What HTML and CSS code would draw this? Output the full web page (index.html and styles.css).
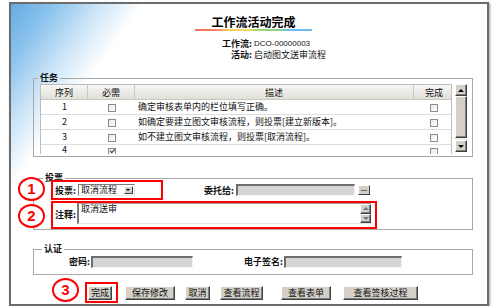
FILE: index.html
```html
<!DOCTYPE html>
<html lang="zh-CN">
<head>
    <meta charset="UTF-8">
    <title>工作流活动完成</title>
    <link rel="stylesheet" href="styles.css">
</head>
<body>
    <div class="frame">
        <span class="callout c1">1</span>
        <span class="callout c2">2</span>
        <span class="callout c3">3</span>

        <div class="head">
            <div class="title">工作流活动完成</div>
            <div class="rule"></div>
            <div class="info">
                <div class="info-row"><b>工作流:</b><span class="code">DCO-00000003</span></div>
                <div class="info-row"><b>活动:</b><span>启动图文送审流程</span></div>
            </div>
        </div>

        <fieldset class="group tasks">
            <legend>任务</legend>
            <div class="grid-wrap">
                <div class="grid-view">
                    <table class="grid">
                        <tr>
                            <th class="col-no">序列</th>
                            <th class="col-req">必需</th>
                            <th class="col-desc">描述</th>
                            <th class="col-done">完成</th>
                        </tr>
                        <tr>
                            <td class="c">1</td>
                            <td class="c"><span class="chk"></span></td>
                            <td>确定审核表单内的栏位填写正确。</td>
                            <td class="c"><span class="chk"></span></td>
                        </tr>
                        <tr>
                            <td class="c">2</td>
                            <td class="c"><span class="chk"></span></td>
                            <td>如确定要建立图文审核流程，则投票[建立新版本]。</td>
                            <td class="c"><span class="chk"></span></td>
                        </tr>
                        <tr>
                            <td class="c">3</td>
                            <td class="c"><span class="chk"></span></td>
                            <td>如不建立图文审核流程，则投票[取消流程]。</td>
                            <td class="c"><span class="chk"></span></td>
                        </tr>
                        <tr class="last">
                            <td class="c">4</td>
                            <td class="c"><span class="chk on"></span></td>
                            <td></td>
                            <td class="c"><span class="chk"></span></td>
                        </tr>
                    </table>
                </div>
                <div class="vscroll">
                    <div class="sb-btn"><span class="arr up"></span></div>
                    <div class="sb-thumb"></div>
                    <div class="sb-track"></div>
                    <div class="sb-btn"><span class="arr down"></span></div>
                </div>
            </div>
        </fieldset>

        <fieldset class="group vote">
            <legend>投票</legend>
            <div class="vote-row">
                <div class="mark mark-vote">
                    <b class="lbl">投票:</b>
                    <div class="select">
                        <span>取消流程</span>
                        <span class="select-btn"><span class="arr down"></span></span>
                    </div>
                </div>
                <b class="lbl lbl-deleg">委托给:</b>
                <div class="field field-deleg"></div>
                <div class="btn-dots">...</div>
            </div>
            <div class="vote-row">
                <div class="mark mark-note">
                    <b class="lbl lbl-note">注释:</b>
                    <div class="memo">
                        <span class="memo-text">取消送审</span>
                        <div class="memo-scroll">
                            <div class="sb-btn"><span class="arr up small"></span></div>
                            <div class="sb-btn"><span class="arr down small"></span></div>
                        </div>
                    </div>
                </div>
            </div>
        </fieldset>

        <fieldset class="group auth">
            <legend>认证</legend>
            <div class="auth-row">
                <b class="lbl lbl-pwd">密码:</b>
                <div class="field field-pwd"></div>
                <b class="lbl lbl-sig">电子签名:</b>
                <div class="field field-sig"></div>
            </div>
        </fieldset>

        <div class="actions">
            <div class="mark mark-done">
                <button class="btn btn-done">完成</button>
            </div>
            <button class="btn btn-save">保存修改</button>
            <button class="btn btn-cancel">取消</button>
            <button class="btn btn-flow">查看流程</button>
            <button class="btn btn-form">查看表单</button>
            <button class="btn btn-sign">查看签核过程</button>
        </div>
    </div>
</body>
</html>
```

FILE: styles.css
```css
body {
    margin: 0;
    background: #fff;
    font-family: "Noto Sans CJK SC", sans-serif;
    font-size: 9px;
    color: #111;
}
.frame {
    position: relative;
    width: 476px;
    height: 300px;
    margin: 2px 0 0 9px;
    border: 2px solid #6c6c6c;
    box-shadow: 1px 1px 2px #9a9a9a;
    background: linear-gradient(126deg, #64abe2 0, #8cc3ed 35px, #cbe4f7 72px, #fff 108px);
    overflow: hidden;
}

/* header */
.head {
    padding: 11px 0 0 9px;
    text-align: center;
}
.title {
    font-size: 12px;
    line-height: 14px;
    font-weight: bold;
    color: #000;
}
.rule {
    width: 117px;
    height: 2px;
    margin: 0 auto;
    background: linear-gradient(90deg, #f2705f 0, #f4866a 18%, #f5d55a 30%, #f3da62 45%, #9bd67a 55%, #92d27a 70%, #6cbff0 80%, #6cbff0 100%);
}
.info {
    margin: 7px 0 0 180px;
    text-align: left;
}
.info-row {
    display: flex;
    line-height: 12px;
}
.info-row + .info-row {
    margin-top: -1px;
}
.info-row b {
    width: 52px;
    text-align: right;
    margin-right: 2px;
}
.code {
    font-family: "Liberation Sans", sans-serif;
    font-size: 8px;
}

/* group boxes */
.group {
    box-sizing: border-box;
    width: 440px;
    margin: 0 0 0 22px;
    border: 1px solid #a8a8a8;
}
.group legend {
    padding: 0 2px;
    font-weight: bold;
    line-height: 10px;
}
.tasks {
    margin-top: 12px;
    padding: 1px 4px 2px 6px;
}
.tasks legend {
    margin-left: -2px;
}
.grid-wrap {
    display: flex;
    align-items: flex-start;
}
.grid-view {
    box-sizing: border-box;
    width: 412px;
    height: 70px;
    border: 1px solid #bdbdbd;
    border-bottom: none;
    overflow: hidden;
    background: #fff;
}
.grid {
    border-collapse: separate;
    border-spacing: 0;
    width: 410px;
    table-layout: fixed;
}
.grid th {
    height: 14px;
    padding: 0;
    font-weight: normal;
    background: linear-gradient(#f8f7f4, #e1dfd9);
    border-right: 1px solid #c9c7c1;
    border-bottom: 1px solid #c9c7c1;
}
.grid th:last-child {
    border-right: none;
}
.col-no { width: 46px; }
.col-req { width: 46px; }
.col-desc { width: 278px; }
.col-done { width: 40px; }
.grid td {
    height: 14px;
    padding: 0 0 0 3px;
    border-bottom: 1px solid #dedede;
    white-space: nowrap;
    line-height: 14px;
}
.grid td.c {
    text-align: center;
    padding: 0;
}
.grid .last td {
    vertical-align: top;
    line-height: 9px;
}
.chk {
    display: inline-block;
    box-sizing: border-box;
    width: 8px;
    height: 8px;
    border: 1px solid #8c8c8c;
    background: linear-gradient(135deg, #e8e8e8, #fff);
    vertical-align: middle;
    position: relative;
}
.grid .last .chk {
    margin-top: 3px;
}
.chk.on::after {
    content: "";
    position: absolute;
    left: 1px;
    top: 0;
    width: 4px;
    height: 2px;
    border-left: 1px solid #333;
    border-bottom: 1px solid #333;
    transform: rotate(-45deg);
}

/* scrollbars */
.vscroll {
    width: 12px;
    height: 68px;
    margin-left: 3px;
    display: flex;
    flex-direction: column;
    background: #eeede9;
}
.sb-btn, .sb-thumb {
    box-sizing: border-box;
    background: #d4d0c8;
    border: 1px solid;
    border-color: #fff #404040 #404040 #fff;
    box-shadow: inset -1px -1px #808080;
}
.sb-btn {
    height: 12px;
    display: flex;
    align-items: center;
    justify-content: center;
}
.sb-thumb {
    height: 42px;
}
.sb-track {
    flex: 1;
}
.arr {
    width: 0;
    height: 0;
    border-left: 3px solid transparent;
    border-right: 3px solid transparent;
}
.arr.up {
    border-bottom: 3px solid #000;
}
.arr.down {
    border-top: 3px solid #000;
}
.arr.small.up {
    border-bottom-color: #777;
}
.arr.small.down {
    border-top-color: #777;
}

/* vote */
.vote {
    margin-top: 17px;
    padding: 0 0 0 17px;
}
.vote legend {
    margin-left: -8px;
    line-height: 8px;
}
.vote-row {
    display: flex;
    align-items: center;
}
.vote-row:first-of-type {
    margin-top: -2px;
}
.mark {
    position: relative;
    border: 2px solid #f00;
    display: flex;
    align-items: center;
}
.mark-vote {
    box-sizing: border-box;
    width: 112px;
    height: 20px;
    padding: 0 2px;
}
.lbl {
    font-weight: bold;
    white-space: nowrap;
}
.select {
    box-sizing: border-box;
    display: flex;
    align-items: center;
    justify-content: space-between;
    width: 57px;
    height: 12px;
    margin-left: 2px;
    padding: 0 1px 0 2px;
    border: 1px solid;
    border-color: #7a7a7a #e8e8e8 #e8e8e8 #7a7a7a;
    background: #fff;
    line-height: 10px;
}
.select-btn {
    box-sizing: border-box;
    width: 9px;
    height: 8px;
    display: flex;
    align-items: center;
    justify-content: center;
    background: #d4d0c8;
    border: 1px solid;
    border-color: #fff #404040 #404040 #fff;
}
.select-btn .arr {
    border-left-width: 2px;
    border-right-width: 2px;
    border-top-width: 2px;
}
.lbl-deleg {
    width: 71px;
    text-align: right;
}
.field {
    box-sizing: border-box;
    height: 12px;
    background: #d5d3d6;
    border-style: solid;
    border-width: 2px 1px 1px 2px;
    border-color: #6e6e6e #f4f4f4 #f4f4f4 #6e6e6e;
}
.field-deleg {
    width: 119px;
    margin-left: 2px;
}
.btn-dots {
    box-sizing: border-box;
    width: 12px;
    height: 10px;
    margin-left: 3px;
    background: #d4d0c8;
    border: 1px solid;
    border-color: #fff #404040 #404040 #fff;
    font: bold 8px/5px "Liberation Sans", sans-serif;
    text-align: center;
    color: #222;
}
.mark-note {
    box-sizing: border-box;
    width: 326px;
    height: 28px;
    margin-top: 1px;
    padding: 0 4px 2px 2px;
}
.lbl-note {
    width: 22px;
}
.memo {
    box-sizing: border-box;
    display: flex;
    justify-content: space-between;
    width: 294px;
    height: 21px;
    align-self: flex-start;
    background: #fff;
    border-style: solid;
    border-width: 1px 0 1px 2px;
    border-color: #a0a0a0 #fff #e4e4e4 #7a7a7a;
}
.memo-text {
    padding: 0 2px;
    line-height: 10px;
}
.memo-scroll {
    width: 11px;
    display: flex;
    flex-direction: column;
}
.memo-scroll .sb-btn {
    height: 10px;
}

/* auth */
.auth {
    margin-top: 14px;
    padding: 1px 0 6px 0;
}
.auth legend {
    margin-left: 8px;
}
.auth-row {
    display: flex;
    align-items: center;
}
.lbl-pwd {
    width: 56px;
    text-align: right;
}
.field-pwd {
    width: 102px;
    margin-left: 1px;
}
.lbl-sig {
    width: 90px;
    text-align: right;
}
.field-sig {
    width: 118px;
    margin-left: 1px;
}

/* buttons */
.actions {
    display: flex;
    align-items: center;
    margin: 7px 0 0 74px;
}
.mark-done {
    padding: 2px 4px 1px 1px;
}
.btn {
    box-sizing: border-box;
    height: 14px;
    padding: 0;
    font-family: inherit;
    font-size: 9px;
    line-height: 12px;
    color: #111;
    background: #d4d0c8;
    border: 1px solid;
    border-color: #fff #404040 #404040 #fff;
    box-shadow: inset -1px -1px #808080;
}
.btn-done { width: 24px; }
.btn-save { width: 50px; margin-left: 7px; }
.btn-cancel { width: 25px; margin-left: 10px; }
.btn-flow { width: 43px; margin-left: 10px; }
.btn-form { width: 50px; margin-left: 18px; }
.btn-sign { width: 75px; margin-left: 12px; }

/* numbered callouts */
.callout {
    position: absolute;
    width: 23px;
    height: 20px;
    border: 2px solid #f00;
    border-radius: 50%;
    background: #fff;
    color: #f00;
    font: bold 15px/20px "Liberation Sans", sans-serif;
    text-align: center;
}
.c1 { left: 7px; top: 173px; }
.c2 { left: 7px; top: 200px; }
.c3 { left: 41px; top: 274px; }
```
